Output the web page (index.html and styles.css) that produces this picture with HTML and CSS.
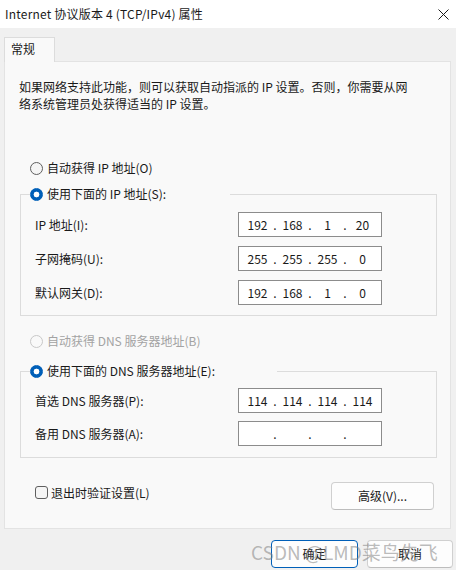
FILE: index.html
```html
<!DOCTYPE html>
<html lang="zh-CN">
<head>
<meta charset="utf-8">
<link rel="stylesheet" href="styles.css">
</head>
<body>
<div class="window">
  <div class="titlebar">
    <span class="title">Internet 协议版本 4 (TCP/IPv4) 属性</span>
    <svg class="close" viewBox="0 0 11 11"><path d="M0.5 0.5L10.5 10.5M10.5 0.5L0.5 10.5" stroke="#1a1a1a" stroke-width="1" fill="none"/></svg>
  </div>
  <div class="tabs"><div class="tab">常规</div></div>
  <div class="panel">
    <p class="desc">如果网络支持此功能，则可以获取自动指派的 IP 设置。否则，你需要从网<br>络系统管理员处获得适当的 IP 设置。</p>

    <div class="opt opt-first"><span class="radio"></span><span>自动获得 IP 地址(O)</span></div>

    <fieldset class="group group-ip">
      <legend class="legend legend-ip"><span class="radio on"></span><span>使用下面的 IP 地址(S):</span></legend>
      <div class="fields">
        <span class="label">IP 地址(I):</span>
        <div class="ipbox"><span class="seg">192</span><span class="dot">.</span><span class="seg">168</span><span class="dot">.</span><span class="seg">1</span><span class="dot">.</span><span class="seg">20</span></div>
        <span class="label">子网掩码(U):</span>
        <div class="ipbox"><span class="seg">255</span><span class="dot">.</span><span class="seg">255</span><span class="dot">.</span><span class="seg">255</span><span class="dot">.</span><span class="seg">0</span></div>
        <span class="label">默认网关(D):</span>
        <div class="ipbox"><span class="seg">192</span><span class="dot">.</span><span class="seg">168</span><span class="dot">.</span><span class="seg">1</span><span class="dot">.</span><span class="seg">0</span></div>
      </div>
    </fieldset>

    <div class="opt opt-dns disabled"><span class="radio dim"></span><span>自动获得 DNS 服务器地址(B)</span></div>

    <fieldset class="group group-dns">
      <legend class="legend legend-dns"><span class="radio on"></span><span>使用下面的 DNS 服务器地址(E):</span></legend>
      <div class="fields fields-dns">
        <span class="label">首选 DNS 服务器(P):</span>
        <div class="ipbox"><span class="seg">114</span><span class="dot">.</span><span class="seg">114</span><span class="dot">.</span><span class="seg">114</span><span class="dot">.</span><span class="seg">114</span></div>
        <span class="label">备用 DNS 服务器(A):</span>
        <div class="ipbox"><span class="seg"></span><span class="dot">.</span><span class="seg"></span><span class="dot">.</span><span class="seg"></span><span class="dot">.</span><span class="seg"></span></div>
      </div>
    </fieldset>

    <div class="bottomrow">
      <div class="check"><span class="box"></span><span>退出时验证设置(L)</span></div>
      <button class="btn btn-adv">高级(V)...</button>
    </div>
  </div>
  <div class="footer">
    <button class="btn btn-ok">确定</button>
    <button class="btn btn-cancel">取消</button>
  </div>
  <div class="watermark">CSDN @LMD菜鸟先飞</div>
</div>
</body>
</html>
```
FILE: styles.css
```css
* { box-sizing: border-box; }
html, body { margin: 0; padding: 0; }
body {
  width: 456px;
  height: 570px;
  overflow: hidden;
  background: #f0f0f0;
  font-family: "Noto Sans CJK SC", "Microsoft YaHei", sans-serif;
  font-size: 12px;
  color: #1a1a1a;
}
.window { position: relative; height: 570px; }

.titlebar {
  height: 28px;
  background: #ffffff;
  display: flex;
  align-items: center;
  justify-content: space-between;
  padding: 0 7px 0 5px;
}
.title { line-height: 16px; letter-spacing: 0.2px; }
.close { width: 11px; height: 11px; display: block; }

.tabs {
  height: 33px;
  padding: 9px 0 0 4px;
  display: flex;
  align-items: flex-start;
}
.tab {
  position: relative;
  z-index: 1;
  width: 51px;
  height: 25px;
  background: #f9f9f9;
  border: 1px solid #dcdcdc;
  border-bottom: none;
  padding: 2px 0 0 6px;
  line-height: 18px;
}

.panel {
  margin: 0 5px 0 4px;
  height: 468px;
  background: #f9f9f9;
  border: 1px solid #e3e3e3;
  display: flex;
  flex-direction: column;
}
.desc {
  margin: 16px 0 0 14px;
  line-height: 17px;
  white-space: nowrap;
}

.opt {
  display: flex;
  align-items: center;
  gap: 4px;
  height: 18px;
  margin-left: 25px;
  line-height: 18px;
}
.opt-first { margin-top: 47px; }
.opt-dns { margin-top: 16px; }
.disabled { color: #a3a3a3; }

.radio {
  flex: none;
  width: 13px;
  height: 13px;
  border-radius: 50%;
  border: 1px solid #5f5f5f;
  background: #f5f5f5;
}
.radio.on {
  border-color: #005fb8;
  background: radial-gradient(circle, #ffffff 0 2.6px, #005fb8 3.2px);
}
.radio.dim { border-color: #c8c8c8; background: #f9f9f9; }

.group {
  margin: 8px 13px 0 15px;
  padding: 9px 54px 10px 9px;
  border: 1px solid #dcdcdc;
  min-width: 0;
}
.group-dns { margin-top: 12px; padding-top: 8px; padding-bottom: 11px; }
.legend {
  display: flex;
  align-items: center;
  gap: 4px;
  padding: 0;
  height: 18px;
  line-height: 18px;
}
.legend-ip { width: 200px; }
.legend-dns { width: 247px; }

.fields {
  display: grid;
  grid-template-columns: 1fr 144px;
  row-gap: 9px;
  align-items: center;
  padding-left: 5px;
}
.fields-dns { row-gap: 8px; }
.label { line-height: 18px; }

.ipbox {
  height: 25px;
  background: #ffffff;
  border: 1px solid #8c8c8c;
  display: flex;
  align-items: center;
  padding: 0 5px;
  line-height: 18px;
}
.seg { width: 27px; text-align: center; }
.dot { width: 8px; text-align: center; }

.bottomrow {
  margin: 24px 16px 0 30px;
  display: flex;
  justify-content: space-between;
  align-items: flex-start;
}
.check {
  display: flex;
  align-items: center;
  gap: 3px;
  height: 18px;
  margin-top: 1px;
}
.box {
  width: 13px;
  height: 13px;
  border: 1px solid #5f5f5f;
  border-radius: 3px;
  background: #f5f5f5;
}

.btn {
  font: inherit;
  color: #1a1a1a;
  background: #fdfdfd;
  border: 1px solid #d0d0d0;
  border-bottom-color: #bdbdbd;
  border-radius: 4px;
  height: 28px;
  padding: 0;
  line-height: 18px;
}
.btn-adv { width: 103px; }

.footer {
  display: flex;
  justify-content: flex-end;
  gap: 9px;
  margin-top: 11px;
  padding-right: 3px;
}
.btn-ok { width: 87px; border-color: #005fb8; }
.btn-cancel { width: 86px; }

.watermark {
  position: absolute;
  left: 251px;
  top: 538px;
  font-size: 19px;
  line-height: 28px;
  color: rgba(130, 130, 130, 0.55);
  white-space: nowrap;
}
```
